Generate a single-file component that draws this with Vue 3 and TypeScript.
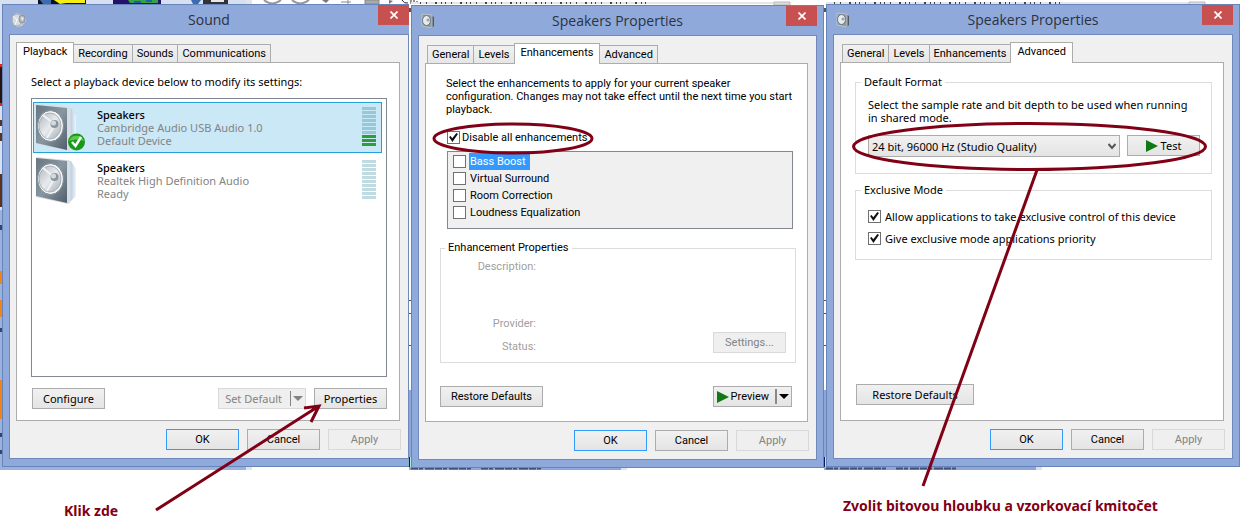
<script setup lang="ts">
import { ref } from 'vue'

interface Device { name: string; detail: string; state: string; level: number }

const soundTabs: string[] = ['Playback', 'Recording', 'Sounds', 'Communications']
const speakerTabs: string[] = ['General', 'Levels', 'Enhancements', 'Advanced']

const devices: Device[] = [
  { name: 'Speakers', detail: 'Cambridge Audio USB Audio 1.0', state: 'Default Device', level: 3 },
  { name: 'Speakers', detail: 'Realtek High Definition Audio', state: 'Ready', level: 0 },
]
const selectedDevice = ref(0)

const effects: string[] = ['Bass Boost', 'Virtual Surround', 'Room Correction', 'Loudness Equalization']
const enabledEffects = ref<string[]>([])
const disableAll = ref(true)
const allowExclusive = ref(true)
const exclusivePriority = ref(true)
const format = ref('24 bit, 96000 Hz (Studio Quality)')
</script>

<template>
  <main class="page">
    <section class="desktop">
      <svg class="backdrop" viewBox="0 0 1243 470" preserveAspectRatio="none" aria-hidden="true">
        <rect width="1243" height="470" fill="#fff" />
        <rect width="246" height="470" fill="#d6e0f0" />
        <rect y="210" width="246" height="260" fill="#9ab2de" />
        <rect x="246" width="6" height="470" fill="#e4e4e6" />
        <path d="M38 0h48v4H38z" fill="#111" />
        <path d="M40 0h11v4H43z" fill="#3b6cb0" />
        <path d="M54 0h31v3H66l-6 1z" fill="#f6ee10" />
        <path d="M113 0h48v4h-48z" fill="#26106e" />
        <path d="M128 0h30v3h-28z" fill="#35a344" />
        <path d="M134 1h7v2h-7zM146 0h6v2h-6z" fill="#1c62a8" />
        <path d="M191 0h10l-3 4h-5z" fill="#3b6cb0" />
        <path d="M203 0h25v4h-25z" fill="#333" />
        <path d="M211 0h13v2h-13z" fill="#e8e8e8" />
        <path d="M264 0q8 7 17 0M292 0q8 7 17 0" fill="none" stroke="#999" stroke-width="2" />
        <path d="M322 0h7l-3 3zM389 0v4l4-3z" fill="#777" />
        <path d="M341 2h10M348 0v4M365 0h14v4h-14z" stroke="#888" fill="#aaa" />
        <path d="M402 0q2 4 6 3M411 0v4M414 0v4M417 1v3" fill="none" stroke="#222" />
        <path d="M411 3h363M826 3h363" stroke="#e6e6ea" stroke-width="2" />
        <path d="M420 3h230M834 3h230" stroke="#444" stroke-width="2" stroke-dasharray="1 5 1 8 2 4 1 3" />
        <path d="M774 2h16v3h-16zM1189 2h16v3h-16z" fill="#ddd" stroke="#bbb" />
        <rect y="64" width="2" height="42" fill="#28120e" />
        <path d="M0 64h2v3H0zM0 103h2v3H0z" fill="#f02010" />
        <path d="M0 120h2v6H0zM0 133h2v8H0zM0 174h2v33H0z" fill="#5a331c" />
        <path d="M0 271h2v13H0zM0 300h2v17H0zM0 380h2v39H0z" fill="#f08418" />
        <path d="M0 328h2v4H0zM0 433h2v4H0zM0 450h2v4H0zM0 225h2v5H0z" fill="#34456a" />
        <path d="M409 8h2v4h-2zM824 8h2v4h-2zM409 300h2v1h-2zM409 313h2v1h-2zM409 345h2v1h-2zM824 300h2v1h-2zM824 313h2v1h-2zM824 345h2v1h-2z" fill="#555" />
        <path d="M409 390h212v80H409zM824 390h212v80H824z" fill="#8da7d8" />
        <path d="M621 390h6v80h-6zM1036 390h6v80h-6z" fill="#e2e2e4" />
        <path d="M409 457h1v10h-1zM824 457h1v10h-1z" fill="#101560" />
        <path d="M410 457h1v10h-1zM825 457h1v10h-1z" fill="#a8f0d0" />
        <path d="M411 468.500h60m10 0h62M826 468.500h60m10 0h62" stroke="#41517a" stroke-width="2" stroke-dasharray="7 1 4 2 9 1" />
      </svg>

      <article class="window cropped" aria-label="Sound">
        <header class="titlebar">
          <svg class="app-icon" viewBox="0 0 16 16" aria-hidden="true">
            <path d="M5 1l4 1 5 2 1 5-4 5-5 1-4-3-1-6z" fill="#c9ced2" />
            <ellipse cx="6" cy="8" rx="5" ry="6" fill="#d9dcdf" stroke="#a2aab0" />
            <path d="M6 8L2 4M6 8l-2 5M6 8l4-5" stroke="#f8f8f8" />
            <ellipse cx="11" cy="7" rx="3" ry="4" fill="#b2b8bc" stroke="#8b949a" />
            <path d="M10 5l3 1-2 3z" fill="#eee" />
          </svg>
          <h1>Sound</h1>
          <button class="close" type="button" aria-label="Close">
            <svg viewBox="0 0 8 8"><path d="M0.500 0.500l7 7m0-7l-7 7" stroke="#fff" stroke-width="1.700" /></svg>
          </button>
        </header>
        <div class="client">
          <nav class="tabs">
            <button v-for="t in soundTabs" :key="t" type="button" :class="['tab', { active: t === 'Playback' }]">{{ t }}</button>
          </nav>
          <section class="panel panel-sound">
            <p class="lead">Select a playback device below to modify its settings:</p>
            <ul class="devices">
              <li v-for="(d, i) in devices" :key="d.detail" :class="['device', { selected: i === selectedDevice }]" @click="selectedDevice = i">
                <svg class="speaker" viewBox="0 0 50 48" aria-hidden="true">
                  <defs>
                    <linearGradient :id="'face' + i" x1="0" y1="0" x2="1" y2="1">
                      <stop offset="0" stop-color="#687681" /><stop offset=".5" stop-color="#8796a1" /><stop offset="1" stop-color="#4f5e6a" />
                    </linearGradient>
                    <linearGradient :id="'side' + i" x1="0" y1="0" x2="1" y2="0">
                      <stop offset="0" stop-color="#e3ebf3" /><stop offset=".5" stop-color="#c3d3e3" /><stop offset="1" stop-color="#edf5fc" />
                    </linearGradient>
                    <linearGradient :id="'cone' + i" x1="0" y1="0" x2="1" y2="1">
                      <stop offset="0" stop-color="#aeb6bf" /><stop offset=".5" stop-color="#e8ebee" /><stop offset="1" stop-color="#a4adb6" />
                    </linearGradient>
                  </defs>
                  <path d="M31 3l4 1 5 8v27l-6 6h-3z" :fill="'url(#side' + i + ')'" />
                  <path d="M0 0l30 3 4 1v42l-2 1L0 40z" fill="#d8dde1" />
                  <path d="M0 1l31 3v42L0 39z" :fill="'url(#face' + i + ')'" />
                  <ellipse cx="14.500" cy="22" rx="13" ry="15.500" fill="#f4f6f7" stroke="#7d8890" />
                  <ellipse cx="14" cy="22" rx="11" ry="13" :fill="'url(#cone' + i + ')'" stroke="#a8b0b8" />
                  <path d="M18 20L7 11M18 22l-7 12" stroke="#f0f2f4" stroke-width="2" />
                  <circle cx="18.500" cy="20" r="4" fill="#8c959d" />
                  <circle cx="17.500" cy="19" r="2.500" fill="#d5dadd" />
                  <g v-if="i === 0">
                    <circle cx="40.500" cy="38" r="8.500" fill="#179a1c" />
                    <path d="M33 37a8 8 0 0 1 15 0q-7-3-15 0z" fill="#5ac94a" />
                    <path d="M36 38l3.500 4L45 33" fill="none" stroke="#fff" stroke-width="2.500" />
                  </g>
                </svg>
                <div class="device-text">
                  <strong>{{ d.name }}</strong>
                  <span>{{ d.detail }}</span>
                  <span>{{ d.state }}</span>
                </div>
                <div class="meter" aria-hidden="true">
                  <i v-for="n in 10" :key="n" :class="{ lit: n > 10 - d.level }"></i>
                </div>
              </li>
            </ul>
            <div class="row">
              <button class="btn wide-face" type="button">Configure</button>
              <button class="btn wide-face split push" type="button" disabled>
                <span>Set Default</span><span class="divider"></span><span class="caret"></span>
              </button>
              <button class="btn wide-face" type="button">Properties</button>
            </div>
          </section>
          <footer class="actions">
            <button class="btn primary" type="button">OK</button>
            <button class="btn" type="button">Cancel</button>
            <button class="btn" type="button" disabled>Apply</button>
          </footer>
        </div>
      </article>

      <article class="window lowered" aria-label="Speakers Properties, Enhancements">
        <header class="titlebar">
          <svg class="app-icon" viewBox="0 0 16 16" aria-hidden="true">
            <path d="M11 2l3 2v9l-3 3z" fill="#4d5961" />
            <path d="M2 1l10 1v13L2 13z" fill="#8d9aa3" stroke="#b9c3ca" />
            <ellipse cx="6.500" cy="7.500" rx="4" ry="5" fill="#e8ebed" stroke="#69747c" />
            <circle cx="8" cy="7" r="1.500" fill="#98a1a7" />
          </svg>
          <h1>Speakers Properties</h1>
          <button class="close" type="button" aria-label="Close">
            <svg viewBox="0 0 8 8"><path d="M0.500 0.500l7 7m0-7l-7 7" stroke="#fff" stroke-width="1.700" /></svg>
          </button>
        </header>
        <div class="client">
          <nav class="tabs inset">
            <button v-for="t in speakerTabs" :key="t" type="button" :class="['tab', { active: t === 'Enhancements' }]">{{ t }}</button>
          </nav>
          <section class="panel panel-enh">
            <p class="intro">Select the enhancements to apply for your current speaker configuration. Changes may not take effect until the next time you start playback.</p>
            <label class="check tight"><input v-model="disableAll" type="checkbox" />Disable all enhancements</label>
            <ul class="effects">
              <li v-for="(e, i) in effects" :key="e">
                <label :class="{ current: i === 0 }"><input v-model="enabledEffects" type="checkbox" :value="e" /><span>{{ e }}</span></label>
              </li>
            </ul>
            <fieldset class="group enh-props">
              <legend>Enhancement Properties</legend>
              <dl>
                <dt class="tall">Description:</dt>
                <dt>Provider:</dt>
                <dt>Status:</dt>
              </dl>
              <button class="btn" type="button" disabled>Settings...</button>
            </fieldset>
            <div class="row">
              <button class="btn restore" type="button">Restore Defaults</button>
              <button class="btn split preview push" type="button">
                <svg class="play" viewBox="0 0 12 12" aria-hidden="true"><path d="M0 0l12 6-12 6z" fill="#0f7a12" /></svg>
                <span>Preview</span><span class="divider"></span><span class="caret"></span>
              </button>
            </div>
          </section>
          <footer class="actions">
            <button class="btn primary" type="button">OK</button>
            <button class="btn" type="button">Cancel</button>
            <button class="btn" type="button" disabled>Apply</button>
          </footer>
        </div>
      </article>

      <article class="window" aria-label="Speakers Properties, Advanced">
        <header class="titlebar">
          <svg class="app-icon" viewBox="0 0 16 16" aria-hidden="true">
            <path d="M11 2l3 2v9l-3 3z" fill="#4d5961" />
            <path d="M2 1l10 1v13L2 13z" fill="#8d9aa3" stroke="#b9c3ca" />
            <ellipse cx="6.500" cy="7.500" rx="4" ry="5" fill="#e8ebed" stroke="#69747c" />
            <circle cx="8" cy="7" r="1.500" fill="#98a1a7" />
          </svg>
          <h1>Speakers Properties</h1>
          <button class="close" type="button" aria-label="Close">
            <svg viewBox="0 0 8 8"><path d="M0.500 0.500l7 7m0-7l-7 7" stroke="#fff" stroke-width="1.700" /></svg>
          </button>
        </header>
        <div class="client">
          <nav class="tabs inset">
            <button v-for="t in speakerTabs" :key="t" type="button" :class="['tab', { active: t === 'Advanced' }]">{{ t }}</button>
          </nav>
          <section class="panel panel-adv">
            <fieldset class="group format">
              <legend>Default Format</legend>
              <label for="format">Select the sample rate and bit depth to be used when running in shared mode.</label>
              <div class="format-row">
                <div class="select">
                  <select id="format" v-model="format">
                    <option>24 bit, 96000 Hz (Studio Quality)</option>
                  </select>
                  <svg viewBox="0 0 8 7" aria-hidden="true"><path d="M0.500 1L4 5l3.500-4" fill="none" stroke="#555" stroke-width="2" /></svg>
                </div>
                <button class="btn wide-face test" type="button">
                  <svg class="play" viewBox="0 0 12 12" aria-hidden="true"><path d="M0 0l12 6-12 6z" fill="#0f7a12" /></svg>Test
                </button>
              </div>
            </fieldset>
            <fieldset class="group exclusive">
              <legend>Exclusive Mode</legend>
              <label class="check"><input v-model="allowExclusive" type="checkbox" />Allow applications to take exclusive control of this device</label>
              <label class="check"><input v-model="exclusivePriority" type="checkbox" />Give exclusive mode applications priority</label>
            </fieldset>
            <div class="row">
              <button class="btn wide-face restore-wide" type="button">Restore Defaults</button>
            </div>
          </section>
          <footer class="actions">
            <button class="btn primary" type="button">OK</button>
            <button class="btn" type="button">Cancel</button>
            <button class="btn" type="button" disabled>Apply</button>
          </footer>
        </div>
      </article>
    </section>

    <section class="captions">
      <p class="click-here">Klik zde</p>
      <p class="choose">Zvolit bitovou hloubku a vzorkovací kmitočet</p>
    </section>

    <svg class="marks" viewBox="0 0 1243 527" preserveAspectRatio="xMinYMin meet" aria-hidden="true">
      <g fill="none" stroke="#800015" stroke-width="3">
        <path d="M156 510L319 406M304 408l15-2-8 16" />
        <ellipse cx="513" cy="138.500" rx="79" ry="14.500" />
        <ellipse cx="1029.500" cy="146.500" rx="176" ry="23" />
        <path d="M1037 170L923 486" />
      </g>
    </svg>
  </main>
</template>

<style>
body { margin: 0; background: #fff; }
</style>

<style scoped>
* { box-sizing: border-box; }
.page { position: relative; font: 11px/13px Roboto, "Noto Sans", sans-serif; color: #000; overflow: hidden; }
.desktop, .captions { display: grid; grid-template-columns: 407fr 413fr 414fr; column-gap: 2px; padding: 0 3px 0 2px; }
.desktop { position: relative; padding-top: 4px; padding-bottom: 2px; align-items: start; }
.backdrop { position: absolute; inset: 0; width: 100%; height: 100%; }
.marks { position: absolute; top: 0; left: 0; width: 100%; pointer-events: none; }

.window { position: relative; min-width: 0; padding: 0 6px 7px; background: #8fa9db; border: 1px solid #6785bb; }
.window.cropped { padding-right: 0; border-right: 0; }
.window.lowered { margin-top: 1px; }
.titlebar { display: grid; grid-template-columns: 31px 1fr 31px; height: 29px; align-items: center; }
.app-icon { width: 16px; height: 16px; margin-left: 2px; }
h1 { margin: 0; text-align: center; font: 14px/20px "Open Sans", "Noto Sans", sans-serif; color: #2b3240; }
.close { align-self: start; width: 31px; height: 20px; padding: 0; border: 0; background: #c75050; display: grid; place-items: center; }
.close svg { width: 8px; height: 8px; }
.client { padding: 7px 7px 8px 6px; background: #f0f0f0; border: 1px solid #7089bb; }

.tabs { display: flex; align-items: flex-end; height: 20px; }
.tabs.inset { padding-left: 2px; }
.tab { height: 18px; margin-left: -1px; padding: 0 4px; font: inherit; color: #000; background: linear-gradient(#f1f1f1, #e6e6e6); border: 1px solid #acacac; border-bottom: 0; }
.tab:first-child { margin-left: 0; }
.tab.active { position: relative; height: 21px; margin-bottom: -1px; padding: 0 6px 3px; background: #fff; }

.panel { display: flex; flex-direction: column; min-height: 359px; margin-right: 1px; background: #fff; border: 1px solid #acacac; }
.panel-sound { padding: 12px 12px 11px 14px; font-family: "Noto Sans", sans-serif; }
.panel-enh { padding: 13px 11px 14px 14px; }
.panel-adv { padding: 12px 11px 15px 14px; font-family: "Noto Sans", sans-serif; }
.row { display: flex; gap: 8px; margin-top: auto; padding-left: 1px; }
.push { margin-left: auto; }
.actions { display: flex; justify-content: flex-end; gap: 8px; margin-top: 8px; }

.btn { display: flex; align-items: center; justify-content: center; min-width: 73px; height: 21px; padding: 0; font: inherit; white-space: nowrap; color: #000; background: linear-gradient(#f1f1f1, #e4e4e4); border: 1px solid #acacac; }
.btn.primary { border-color: #3399ff; }
.btn:disabled { color: #838383; background: #efefef; border-color: #d9d9d9; }
.btn.wide-face { font-family: "Noto Sans", sans-serif; }
.divider { width: 1px; height: 15px; background: currentColor; }
.caret { border: 5px solid transparent; border-top-color: currentColor; border-bottom: 0; }
.split { width: 88px; justify-content: flex-end; padding-right: 2px; gap: 2px; }
.split .divider { margin-left: 6px; }
.play { width: 12px; height: 12px; }

.lead { margin: 0 0 9px; line-height: 14px; }
.devices { flex: 1; margin: 0 0 11px; padding: 3px 4px 3px 1px; list-style: none; border: 1px solid #828790; display: flex; flex-direction: column; gap: 2px; }
.device { display: flex; height: 51px; padding: 1px 5px 1px 2px; border: 1px solid transparent; }
.device.selected { background: #cbe8f6; border-color: #26a0da; }
.speaker { width: 50px; height: 48px; }
.device-text { display: flex; flex-direction: column; margin: 4px 0 0 11px; color: #838383; }
.device-text strong { font-weight: 500; color: #000; }
.meter { display: grid; gap: 1px; width: 14px; margin: 3px 0 0 auto; align-content: start; }
.meter i { height: 3px; background: #c0dce2; }
.selected .meter i { background: #98c8d8; }
.selected .meter i.lit { background: #2f9e36; }

.intro { margin: 0 0 0 6px; }
.check { display: flex; align-items: center; gap: 4px; height: 13px; white-space: nowrap; }
.check.tight { margin: 15px 0 7px 7px; gap: 2px; }
input[type="checkbox"] { appearance: none; flex: none; width: 13px; height: 13px; margin: 0; background: #fff; border: 1px solid #707070; }
input[type="checkbox"]:checked::before { content: ""; display: block; width: 9px; height: 9px; margin: 1px; background: #111; clip-path: polygon(0 45%, 18% 32%, 36% 58%, 82% 0, 100% 12%, 38% 100%); }
.effects { margin: 0 3px 0 7px; padding: 1px 5px; height: 78px; list-style: none; background: #f0f0f0; border: 1px solid #828790; }
.effects label { display: flex; align-items: center; gap: 3px; height: 17px; }
.effects span { padding: 0 1px; line-height: 17px; }
.effects .current span { padding-right: 4px; color: #fff; background: #3399ff; }

.group { min-width: 0; margin: 0; border: 1px solid #dcdcdc; padding: 0; }
.group legend { margin-left: -7px; padding: 0 3px; line-height: 14px; }
.enh-props { height: 122px; margin-top: 12px; display: flex; justify-content: space-between; align-items: flex-end; padding: 0 9px 7px 0; }
.group.enh-props legend { margin-left: 4px; }
.enh-props dl { width: 95px; margin: 0; text-align: right; color: #a0a0a0; align-self: flex-start; padding-top: 5px; }
.enh-props dt { margin-bottom: 10px; }
.enh-props dt.tall { margin-bottom: 44px; }
.enh-props dt:last-child { margin-bottom: 0; }
.row .restore { width: 103px; }
.row .preview { width: 79px; margin-right: 4px; }
.preview .divider { margin-left: 4px; width: 2px; background: #888; }
.panel-enh .row { padding: 0; }
.format { height: 99px; padding: 9px 11px 0 12px; }
.format > label { display: block; padding-right: 10px; line-height: 13px; }
.format-row { display: flex; gap: 7px; margin-top: 11px; }
.select { position: relative; flex: 1; }
.select select { appearance: none; width: 100%; height: 22px; padding: 0 20px 0 3px; font: inherit; color: #000; background: linear-gradient(#f1f1f1, #e4e4e4); border: 1px solid #acacac; border-radius: 0; }
.select svg { position: absolute; top: 8px; right: 4px; width: 8px; height: 7px; }
.test { gap: 3px; }
.exclusive { height: 77px; margin-top: 9px; padding: 13px 12px 0; }
.exclusive .check + .check { margin-top: 9px; }
.restore-wide { width: 118px; }

.captions { padding-top: 26px; padding-bottom: 12px; font: bold 14px/20px "Noto Sans", sans-serif; color: #800015; }
.captions p { margin: 0; white-space: nowrap; }
.click-here { padding: 5px 0 0 62px; }
.captions .choose { grid-column: 3; padding-left: 17px; }
</style>
